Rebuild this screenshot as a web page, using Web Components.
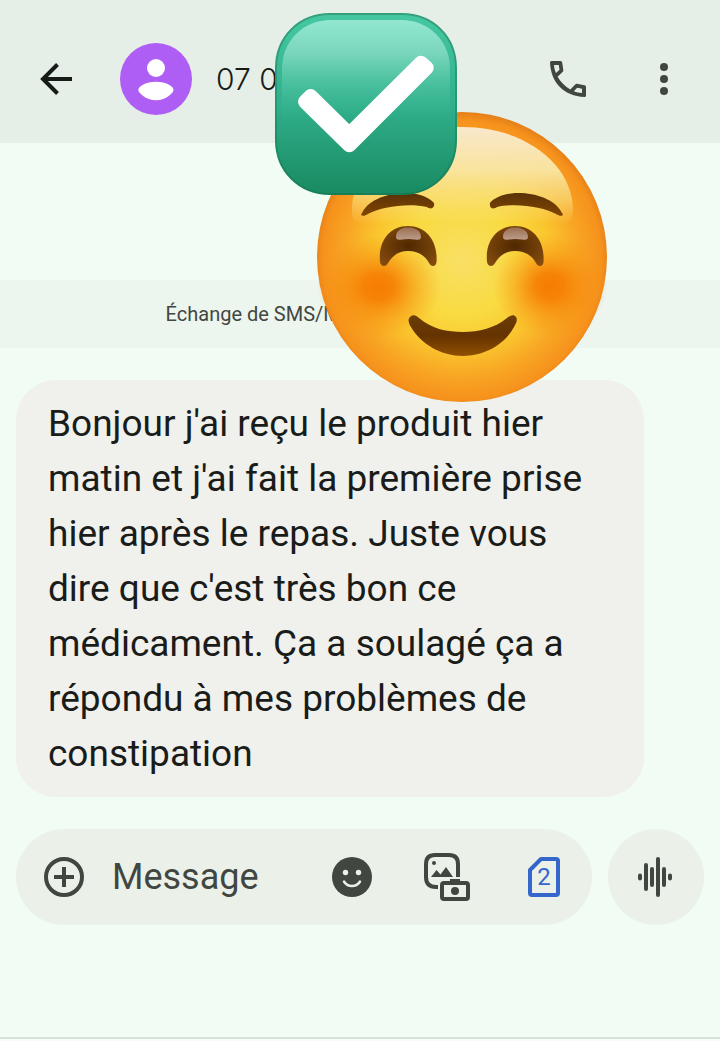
<!DOCTYPE html>
<html lang="fr">
<head>
<meta charset="UTF-8">
<meta name="viewport" content="width=device-width, initial-scale=1.0">
<title>Messages</title>
<style>
  body {
    margin: 0;
    background: #f1fcf4;
    font-family: Roboto, Inter, sans-serif;
    color: #191c19;
  }
</style>
</head>
<body>
<chat-screen>
  <app-bar slot="header">07 0</app-bar>
  <info-strip>Échange de SMS/M</info-strip>
  <message-bubble>Bonjour j'ai reçu le produit hier matin et j'ai fait la première prise hier après le repas. Juste vous dire que c'est très bon ce médicament. Ça a soulagé ça a répondu à mes problèmes de constipation</message-bubble>
  <message-composer slot="footer"></message-composer>
  <smile-sticker slot="stickers"></smile-sticker>
  <check-sticker slot="stickers"></check-sticker>
</chat-screen>

<script>
class ChatScreen extends HTMLElement {
  connectedCallback() {
    this.attachShadow({ mode: 'open' });
    this.shadowRoot.innerHTML = `
      <style>
        :host {
          display: flex;
          flex-direction: column;
          position: relative;
          min-height: 100vh;
          box-sizing: border-box;
          overflow: hidden;
        }

        main {
          display: flex;
          flex-direction: column;
          gap: 32px;
          padding: 137px 0 32px;
        }

        .nav-line {
          margin-top: auto;
          height: 2px;
          border-top: 2px solid #d7e2da;
          background: #f6fcf7;
        }
      </style>

      <slot name="header"></slot>
      <main><slot></slot></main>
      <slot name="footer"></slot>
      <div class="nav-line"></div>
      <slot name="stickers"></slot>
    `;
  }
}

class IconButton extends HTMLElement {
  connectedCallback() {
    this.attachShadow({ mode: 'open' });
    this.shadowRoot.innerHTML = `
      <style>
        :host {
          display: block;
          flex: none;
        }

        button {
          display: grid;
          place-items: center;
          min-width: 40px;
          height: 48px;
          padding: 0;
          border: none;
          background: none;
          color: inherit;
          font: inherit;
          cursor: pointer;
        }
      </style>
      <button type="button" aria-label="${this.getAttribute('label')}"><slot></slot></button>
    `;
  }
}

class AppBar extends HTMLElement {
  connectedCallback() {
    this.attachShadow({ mode: 'open' });
    this.shadowRoot.innerHTML = `
      <style>
        :host {
          display: block;
        }

        header {
          display: flex;
          align-items: center;
          padding: 43px 36px 28px;
          background: #e6eee8;
          color: #414740;
        }

        svg {
          display: block;
        }

        .back {
          color: #171b17;
        }

        .avatar {
          flex: none;
          margin: 0 24px 0 44px;
        }

        h1 {
          flex: 1;
          margin: 0;
          font-family: Inter, sans-serif;
          font-size: 30px;
          line-height: 40px;
          font-weight: 300;
          color: #171b17;
        }

        .actions {
          display: flex;
          gap: 56px;
        }
      </style>

      <header>
        <icon-button class="back" label="Retour">
          <svg width="32" height="32" viewBox="0 0 32 32" fill="none" stroke="currentColor" stroke-width="4">
            <path d="M32 16H3M17.500 1.500L3 16l14.500 14.500"/>
          </svg>
        </icon-button>
        <svg class="avatar" width="72" height="72" viewBox="0 0 72 72">
          <circle cx="36" cy="36" r="36" fill="#ae5df5"/>
          <circle cx="36" cy="25" r="9" fill="#fff"/>
          <path d="M18.300 47C18.300 43 26 38.700 36 38.700S53.500 43 53.500 47C53.500 49.500 46.500 57.300 36 57.300S18.300 49.500 18.300 47z" fill="#fff"/>
        </svg>
        <h1><slot></slot></h1>
        <div class="actions">
          <icon-button label="Appeler">
            <svg width="36" height="36" viewBox="0 0 36 36" fill="currentColor" fill-rule="evenodd">
              <path d="M1.500 0H10.500Q12 0 12.200 1.500L13.300 9Q13.500 10 12.800 10.800L7.600 15.800C11 21.500 15 25.500 20.300 28.400L25.200 23.400Q26 22.600 27 22.800L34.500 24.200Q36 24.500 36 26V34.500Q36 36 34.500 36C14 35 1 22 0 1.500Q0 0 1.500 0ZM4 4H8.800L9.500 8.700L6 12.100C4.800 9.400 4.200 7 4 4ZM23.800 30.200L27.200 26.800L32 27.800V32C29 31.800 26.500 31.200 23.800 30.200Z"/>
            </svg>
          </icon-button>
          <icon-button label="Plus d'options">
            <svg width="8" height="32" viewBox="0 0 8 32" fill="currentColor">
              <circle cx="4" cy="4" r="4"/><circle cx="4" cy="16" r="4"/><circle cx="4" cy="28" r="4"/>
            </svg>
          </icon-button>
        </div>
      </header>
    `;
  }
}

class InfoStrip extends HTMLElement {
  connectedCallback() {
    this.attachShadow({ mode: 'open' });
    this.shadowRoot.innerHTML = `
      <style>
        :host {
          display: block;
          padding: 20px 16px 20px 23%;
          background: #ecf5ee;
          color: #414740;
          font-size: 20px;
          line-height: 28px;
        }
      </style>
      <slot></slot>
    `;
  }
}

class MessageBubble extends HTMLElement {
  connectedCallback() {
    this.attachShadow({ mode: 'open' });
    this.shadowRoot.innerHTML = `
      <style>
        :host {
          display: block;
          margin: 0 76px 0 16px;
        }

        p {
          margin: 0;
          padding: 16px 48px 16px 32px;
          border-radius: 40px;
          background: #f0f0ed;
          font-size: 37px;
          line-height: 55px;
        }
      </style>
      <p><slot></slot></p>
    `;
  }
}

class MessageComposer extends HTMLElement {
  connectedCallback() {
    this.attachShadow({ mode: 'open' });
    this.shadowRoot.innerHTML = `
      <style>
        :host {
          display: block;
          color: #414740;
        }

        form {
          display: flex;
          gap: 16px;
          padding: 0 16px;
        }

        svg {
          display: block;
        }

        .field {
          flex: 1;
          min-width: 0;
          display: flex;
          align-items: center;
          gap: 28px;
          height: 96px;
          box-sizing: border-box;
          padding: 0 28px;
          border-radius: 48px;
          background: #ebf1e9;
        }

        input {
          flex: 1;
          min-width: 0;
          padding: 0;
          border: none;
          outline: none;
          background: none;
          font: inherit;
          font-size: 36px;
          line-height: 48px;
          color: #171b17;
        }

        input::placeholder {
          color: #414740;
          opacity: 1;
        }

        .actions {
          display: flex;
          gap: 52px;
        }

        .sim {
          color: #3566cc;
        }

        .voice {
          display: grid;
          place-items: center;
          flex: none;
          width: 96px;
          height: 96px;
          border-radius: 50%;
          background: #ebf1e9;
        }
      </style>

      <form>
        <div class="field">
          <icon-button label="Ajouter">
            <svg width="40" height="40" viewBox="0 0 40 40" fill="none" stroke="currentColor" stroke-width="4">
              <circle cx="20" cy="20" r="18"/>
              <path d="M20 10v20M10 20h20"/>
            </svg>
          </icon-button>
          <input type="text" placeholder="Message" aria-label="Message">
          <div class="actions">
            <icon-button label="Emoji">
              <svg width="40" height="40" viewBox="0 0 40 40">
                <circle cx="20" cy="20" r="20" fill="currentColor"/>
                <g fill="#ebf1e9"><circle cx="13.500" cy="15.500" r="2.700"/><circle cx="26.500" cy="15.500" r="2.700"/></g>
                <path d="M12 24.500c3.500 6 12.500 6 16 0" fill="none" stroke="#ebf1e9" stroke-width="2.500" stroke-linecap="round"/>
              </svg>
            </icon-button>
            <icon-button label="Galerie">
              <svg width="48" height="48" viewBox="0 0 48 48" fill="none" stroke="currentColor" stroke-width="4">
                <path d="M34 24V11q0-9-9-9H11Q2 2 2 11v13q0 10 10 10h2"/>
                <circle cx="10" cy="10" r="2" fill="currentColor" stroke="none"/>
                <path d="M7 24l5.500-7 4 4.500 5.500-7.500L29 24z" fill="currentColor" stroke="none"/>
                <path d="M26 26h10v4H26z" fill="currentColor" stroke="none"/>
                <rect x="18" y="30" width="26" height="16" rx="2"/>
                <circle cx="31" cy="38" r="4" fill="currentColor" stroke="none"/>
              </svg>
            </icon-button>
            <icon-button class="sim" label="SIM 2">
              <svg width="32" height="40" viewBox="0 0 32 40">
                <path d="M13 2h15q2 0 2 2v32q0 2-2 2H4q-2 0-2-2V13z" fill="none" stroke="currentColor" stroke-width="4" stroke-linejoin="round"/>
                <text x="16" y="28" font-size="24" text-anchor="middle" fill="currentColor">2</text>
              </svg>
            </icon-button>
          </div>
        </div>
        <div class="voice">
          <icon-button label="Message vocal">
            <svg width="36" height="40" viewBox="0 0 36 40" stroke="currentColor" stroke-width="4" stroke-linecap="round">
              <path d="M2 18.500v3M8 8v24M14 12v16M20 2v36M26 12v16M32 18.500v3"/>
            </svg>
          </icon-button>
        </div>
      </form>
    `;
  }
}

class SmileSticker extends HTMLElement {
  connectedCallback() {
    this.attachShadow({ mode: 'open' });
    this.shadowRoot.innerHTML = `
      <style>
        :host {
          position: absolute;
          top: 112px;
          left: 44%;
          pointer-events: none;
        }

        svg {
          display: block;
        }
      </style>

      <svg width="290" height="290" viewBox="0 0 290 290">
        <defs>
          <radialGradient id="skin" cx="145" cy="148" r="150" gradientUnits="userSpaceOnUse">
            <stop offset="0" stop-color="#f8e066"/>
            <stop offset=".38" stop-color="#f9da40"/>
            <stop offset=".6" stop-color="#fac52e"/>
            <stop offset=".78" stop-color="#f8a524"/>
            <stop offset=".93" stop-color="#f6921c"/>
            <stop offset="1" stop-color="#e07a18"/>
          </radialGradient>
          <linearGradient id="shine" x1="0" y1="0" x2="0" y2="1">
            <stop offset="0" stop-color="#f9e8cc"/>
            <stop offset=".45" stop-color="#f9e6a4" stop-opacity=".95"/>
            <stop offset=".75" stop-color="#f9e488" stop-opacity=".6"/>
            <stop offset="1" stop-color="#f8e27c" stop-opacity=".05"/>
          </linearGradient>
          <radialGradient id="cheek">
            <stop offset="0" stop-color="#f67d02"/>
            <stop offset=".25" stop-color="#f67d02" stop-opacity=".9"/>
            <stop offset=".6" stop-color="#f6860a" stop-opacity=".45"/>
            <stop offset="1" stop-color="#f6900f" stop-opacity="0"/>
          </radialGradient>
          <linearGradient id="brow" x1="0" y1="0" x2="0" y2="1">
            <stop offset="0" stop-color="#5a3208"/>
            <stop offset="1" stop-color="#824500"/>
          </linearGradient>
          <radialGradient id="eye" cx=".5" cy=".5" r=".6">
            <stop offset="0" stop-color="#4f2800"/>
            <stop offset="1" stop-color="#824a0c"/>
          </radialGradient>
          <linearGradient id="glint" x1="0" y1="0" x2="0" y2="1">
            <stop offset="0" stop-color="#9a6f50"/>
            <stop offset="1" stop-color="#bd9c8a"/>
          </linearGradient>
          <linearGradient id="mouth" x1="0" y1="0" x2="0" y2="1">
            <stop offset="0" stop-color="#6b3d08"/>
            <stop offset=".5" stop-color="#653300"/>
            <stop offset="1" stop-color="#8f5000"/>
          </linearGradient>
          <path id="brow-shape" d="M45 101C52 86 75 80 92 81C104 82 113 86 117 91C118 96 114 98 110 95C92 91 65 94 49 103C45 105 43 103 45 101Z"/>
          <g id="eye-shape">
            <path d="M63 150C61 130 72 114 91 114C110 114 121 130 119.500 150C119 155 114 155 112 151C108 143 100 139 91 139C82 139 76 143 71 151C69 155 64 155 63 150Z" fill="url(#eye)"/>
            <path d="M79 125C79 118 85 115.500 91 115.500S104 118 104 125C104 128 101 128 98 127.500Q91 126.500 85 127.500C82 128 79 128 79 125Z" fill="url(#glint)"/>
          </g>
        </defs>
        <circle cx="145" cy="145" r="145" fill="url(#skin)"/>
        <path d="M35 100C35 50 85 15 146 15C207 15 256 52 256 98C256 108 252 112 244 111C200 108 90 108 46 111C38 112 35 108 35 100Z" fill="url(#shine)"/>
        <ellipse cx="62" cy="175" rx="62" ry="52" fill="url(#cheek)"/>
        <ellipse cx="233" cy="174" rx="57" ry="52" fill="url(#cheek)"/>
        <use href="#brow-shape" fill="url(#brow)"/>
        <use href="#brow-shape" fill="url(#brow)" transform="translate(290) scale(-1 1)"/>
        <use href="#eye-shape"/>
        <use href="#eye-shape" x="107"/>
        <path d="M93 205C96 202 99 203 102 206C115 217 130 220 146 220C162 220 178 216 190 206C194 203 197 202 199 205C201 208 199 211 197 215C188 232 168 244 146 244C124 244 104 232 94 215C91 210 91 207 93 205Z" fill="url(#mouth)"/>
      </svg>
    `;
  }
}

class CheckSticker extends HTMLElement {
  connectedCallback() {
    this.attachShadow({ mode: 'open' });
    this.shadowRoot.innerHTML = `
      <style>
        :host {
          position: absolute;
          top: 13px;
          left: 38.2%;
          pointer-events: none;
        }

        svg {
          display: block;
        }
      </style>

      <svg width="182" height="182" viewBox="0 0 182 182">
        <defs>
          <linearGradient id="tile" x1="0" y1="0" x2="0" y2="1">
            <stop offset="0" stop-color="#45c8a2"/>
            <stop offset=".5" stop-color="#30b08c"/>
            <stop offset="1" stop-color="#198a61"/>
          </linearGradient>
          <linearGradient id="gloss" x1="0" y1="0" x2="0" y2="1">
            <stop offset="0" stop-color="#93e7d2"/>
            <stop offset=".2" stop-color="#80d9c0" stop-opacity=".9"/>
            <stop offset=".4" stop-color="#5cc8aa" stop-opacity=".45"/>
            <stop offset=".6" stop-color="#40b896" stop-opacity="0"/>
          </linearGradient>
          <linearGradient id="rim" x1="0" y1="0" x2="0" y2="1">
            <stop offset="0" stop-color="#359f7e"/>
            <stop offset=".5" stop-color="#249972"/>
            <stop offset="1" stop-color="#167f58"/>
          </linearGradient>
        </defs>
        <path d="M55 1H127C158 1 181 24 181 55V127C181 158 158 181 127 181H55C24 181 1 158 1 127V55C1 24 24 1 55 1Z" fill="url(#tile)" stroke="url(#rim)" stroke-width="2"/>
        <path d="M56 7H126C154 7 175 28 175 56V175H7V56C7 28 28 7 56 7Z" fill="url(#gloss)"/>
        <path d="M30 88.700L35.700 83L74.300 121L146 49.700L151.700 54.700L74.300 132.300Z" fill="#fff" stroke="#fff" stroke-width="14" stroke-linejoin="round"/>
      </svg>
    `;
  }
}

customElements.define('icon-button', IconButton);
customElements.define('app-bar', AppBar);
customElements.define('info-strip', InfoStrip);
customElements.define('message-bubble', MessageBubble);
customElements.define('message-composer', MessageComposer);
customElements.define('smile-sticker', SmileSticker);
customElements.define('check-sticker', CheckSticker);
customElements.define('chat-screen', ChatScreen);
</script>
</body>
</html>
